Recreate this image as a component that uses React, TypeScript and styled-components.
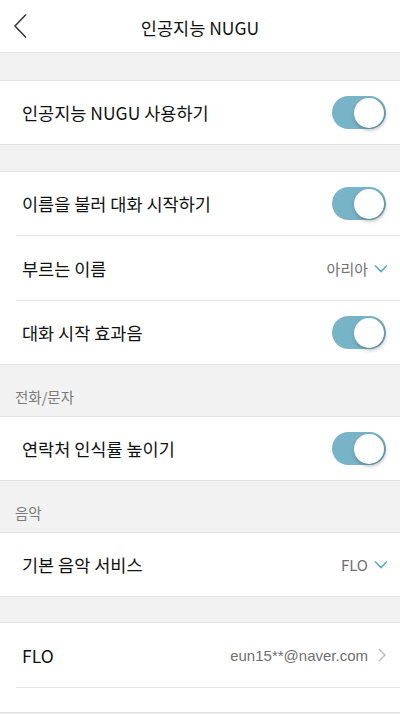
import React, { useState } from 'react'
import styled, { createGlobalStyle } from 'styled-components'

const GlobalStyle = createGlobalStyle`
  html, body {
    margin: 0;
    padding: 0;
    background: #f2f2f2;
  }
  body {
    font-family: 'Noto Sans CJK KR', 'Noto Sans', 'Liberation Sans', sans-serif;
    color: #111;
  }
`

const Page = styled.div`
  width: 400px;
  height: 714px;
  overflow: hidden;
  background: #f2f2f2;
`

const Header = styled.div`
  height: 52px;
  background: #fff;
  border-bottom: 1px solid #e2e2e2;
  display: flex;
  align-items: center;
  justify-content: center;
  position: relative;
`

const Title = styled.div`
  font-size: 17.5px;
  margin-top: 2px;
`

const BackButton = styled.button`
  position: absolute;
  left: 8px;
  top: 12px;
  width: 24px;
  height: 28px;
  padding: 0;
  border: 0;
  background: none;
  display: flex;
  align-items: center;
  justify-content: center;
`

const Gap = styled.div<{ h: number }>`
  height: ${p => p.h}px;
`

const SectionLabel = styled.div`
  height: 51px;
  box-sizing: border-box;
  padding: 21px 0 0 15px;
  font-size: 14.5px;
  color: #7a7a7a;
`

const Group = styled.div`
  background: #fff;
  border-top: 1px solid #e2e2e2;
  border-bottom: 1px solid #e2e2e2;
`

const Row = styled.div<{ divider?: boolean; tall?: boolean }>`
  height: ${p => (p.tall ? 64 : 63)}px;
  display: flex;
  align-items: center;
  justify-content: space-between;
  padding: 0 14px 0 22px;
  position: relative;

  ${p =>
    p.divider &&
    `
    margin-bottom: 1px;
    &::after {
      content: '';
      position: absolute;
      left: 16px;
      right: 0;
      bottom: -1px;
      height: 1px;
      background: #e6e6e6;
    }
  `}
`

const Label = styled.span`
  font-size: 17.5px;
`

const Value = styled.span`
  display: flex;
  align-items: center;
  gap: 6px;
  font-size: 15px;
  color: #707070;
  margin-right: -2px;
`

const Email = styled(Value)`
  font-family: 'Liberation Sans', 'Noto Sans CJK KR', sans-serif;
  gap: 10px;
  margin-right: 0;
`

const SwitchTrack = styled.button<{ on: boolean }>`
  width: 54px;
  height: 33px;
  border: 0;
  padding: 0;
  border-radius: 17px;
  background: ${p => (p.on ? '#78b4c7' : '#dcdcdc')};
  position: relative;
  cursor: pointer;
`

const Knob = styled.span<{ on: boolean }>`
  position: absolute;
  top: 1.5px;
  left: ${p => (p.on ? '22px' : '2px')};
  width: 30px;
  height: 30px;
  border-radius: 50%;
  background: #fff;
  box-shadow: 1px 2px 4px rgba(0, 0, 0, 0.3);
`

const EmptyRow = styled.div`
  height: 24px;
`

const Toggle: React.FC<{ initial?: boolean }> = ({ initial = true }) => {
  const [on, setOn] = useState(initial)
  return (
    <SwitchTrack on={on} onClick={() => setOn(!on)}>
      <Knob on={on} />
    </SwitchTrack>
  )
}

const ChevronDown = () => (
  <svg width="14" height="9" viewBox="0 0 14 9">
    <path d="M1 1.5 L7 7.5 L13 1.5" fill="none" stroke="#5aa7c0" strokeWidth="1.6" />
  </svg>
)

const ChevronRight = () => (
  <svg width="8" height="14" viewBox="0 0 8 14">
    <path d="M1 1 L7 7 L1 13" fill="none" stroke="#b8b8b8" strokeWidth="1.3" />
  </svg>
)

const App: React.FC = () => {
  return (
    <Page>
      <GlobalStyle />
      <Header>
        <BackButton>
          <svg width="16" height="26" viewBox="0 0 16 26">
            <path d="M14 1.5 L3 13 L14 24.5" fill="none" stroke="#333" strokeWidth="1.5" />
          </svg>
        </BackButton>
        <Title>인공지능 NUGU</Title>
      </Header>

      <Gap h={27} />
      <Group>
        <Row>
          <Label>인공지능 NUGU 사용하기</Label>
          <Toggle />
        </Row>
      </Group>

      <Gap h={26} />
      <Group>
        <Row divider>
          <Label>이름을 불러 대화 시작하기</Label>
          <Toggle />
        </Row>
        <Row divider tall>
          <Label>부르는 이름</Label>
          <Value>
            아리아 <ChevronDown />
          </Value>
        </Row>
        <Row>
          <Label>대화 시작 효과음</Label>
          <Toggle />
        </Row>
      </Group>

      <SectionLabel>전화/문자</SectionLabel>
      <Group>
        <Row>
          <Label>연락처 인식률 높이기</Label>
          <Toggle />
        </Row>
      </Group>

      <SectionLabel>음악</SectionLabel>
      <Group>
        <Row>
          <Label>기본 음악 서비스</Label>
          <Value>
            FLO <ChevronDown />
          </Value>
        </Row>
      </Group>

      <Gap h={25} />
      <Group>
        <Row divider tall>
          <Label>FLO</Label>
          <Email>
            eun15**@naver.com <ChevronRight />
          </Email>
        </Row>
        <EmptyRow />
      </Group>
    </Page>
  )
}

export default App
